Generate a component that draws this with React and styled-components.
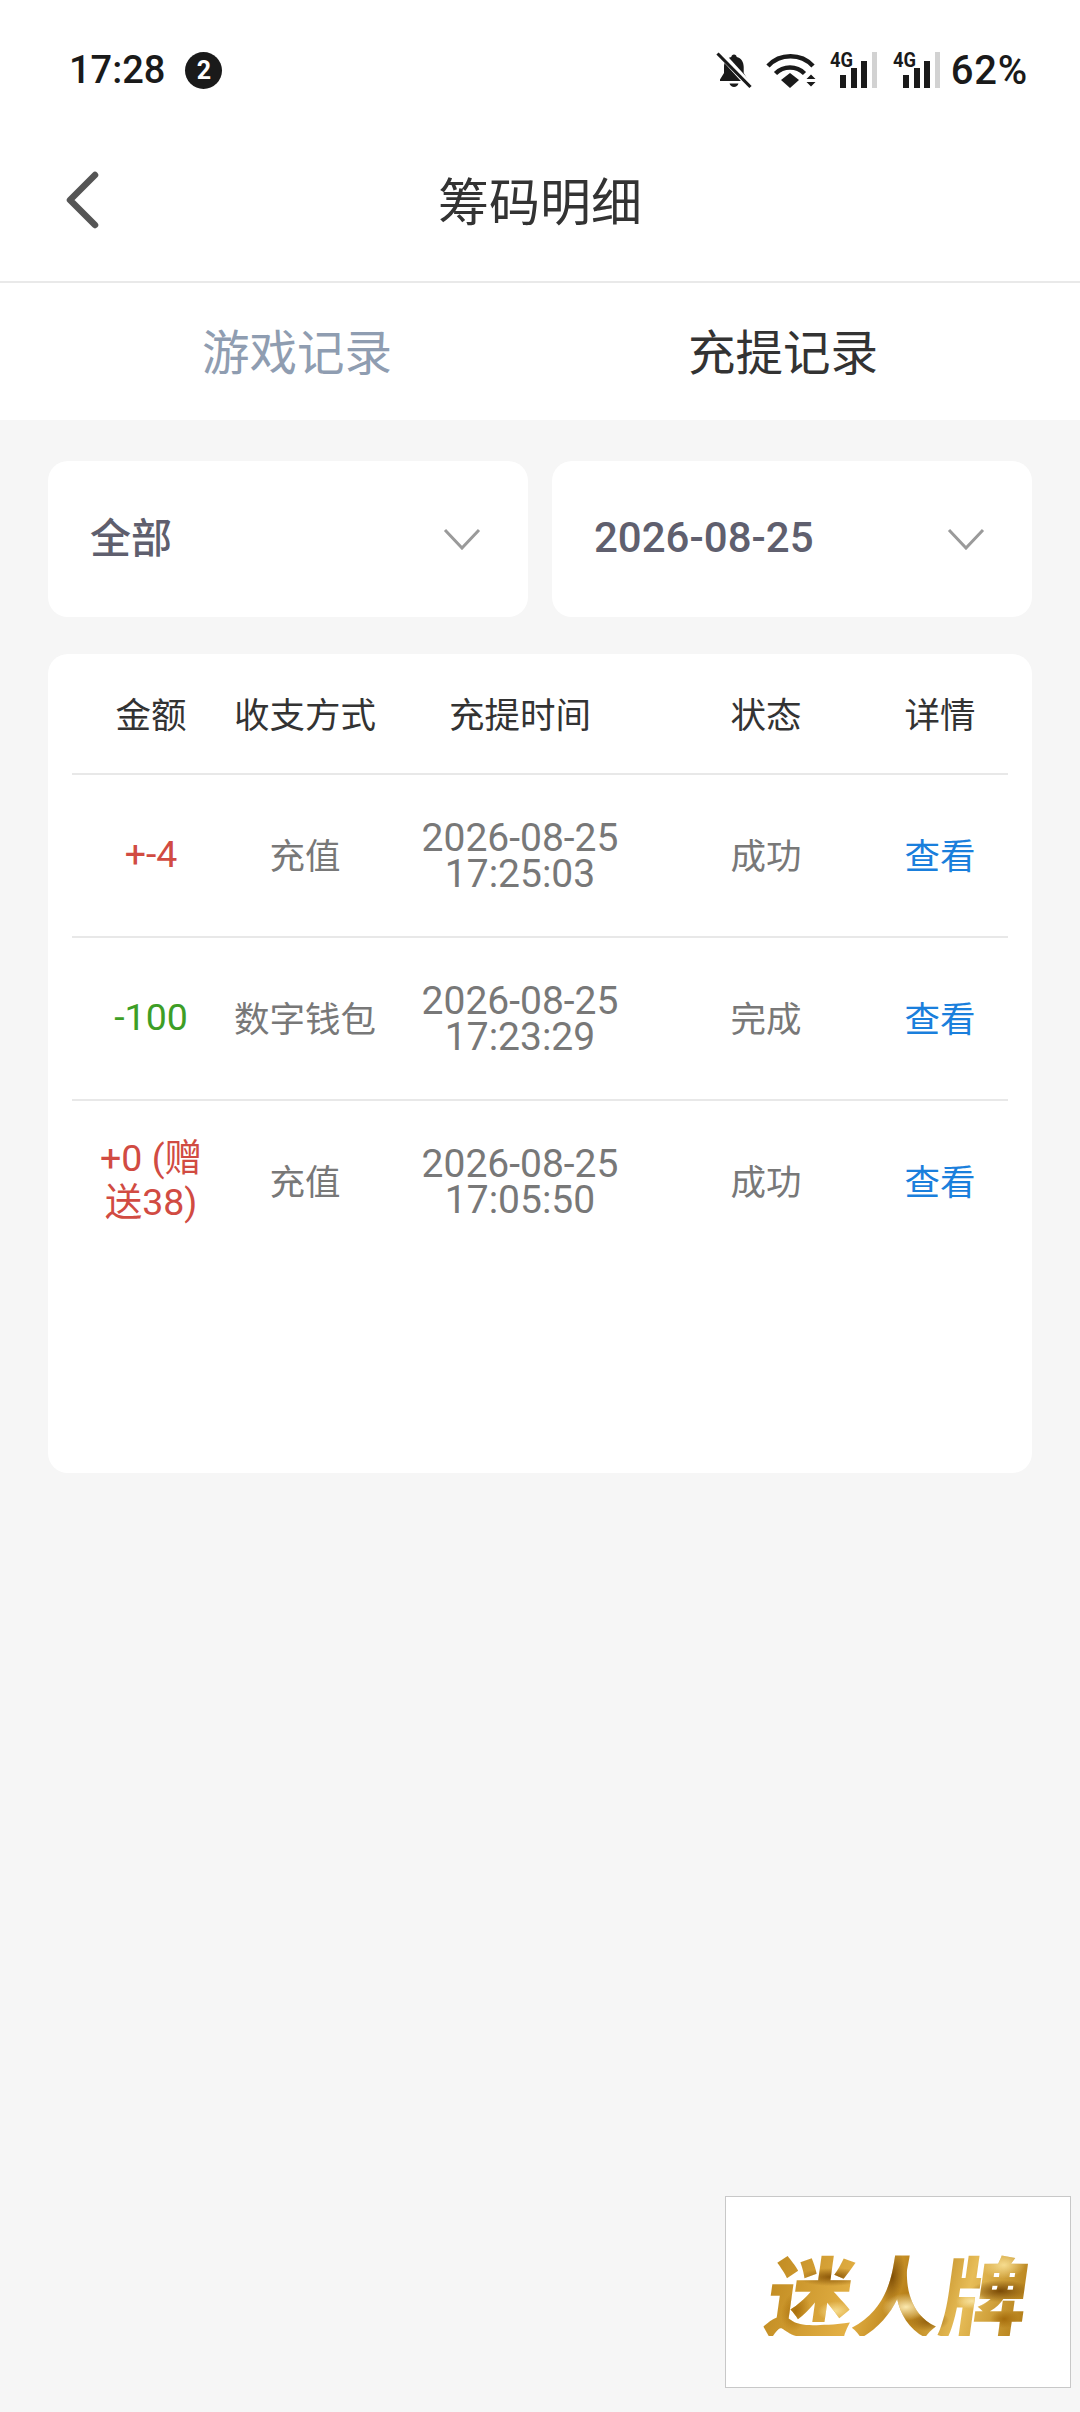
import React from 'react';
import styled, { createGlobalStyle } from 'styled-components';

const FONT = `Roboto, "Noto Sans CJK SC", sans-serif`;
const COLUMNS = '158px 150px 280px 212px 136px';

const GlobalStyle = createGlobalStyle`
  * { box-sizing: border-box; }
  html, body { margin: 0; padding: 0; background: #f6f6f6; }
  body { font-family: ${FONT}; }
`;

const Page = styled.div`
  position: relative;
  width: 1080px;
  height: 2412px;
  overflow: hidden;
  background: #f6f6f6;
`;

const StatusBar = styled.div`
  display: flex;
  align-items: center;
  justify-content: space-between;
  height: 122px;
  padding: 18px 52px 0 69px;
  background: #fff;
  color: #1a1a1a;
`;

const StatusGroup = styled.div`
  display: flex;
  align-items: center;
`;

const Clock = styled.span`
  font-size: 38px;
  font-weight: 500;
`;

const Badge = styled.span`
  display: flex;
  align-items: center;
  justify-content: center;
  width: 37px;
  height: 37px;
  margin-left: 20px;
  border-radius: 50%;
  background: #1a1a1a;
  color: #fff;
  font-size: 25px;
  font-weight: 700;
`;

const StatusIcon = styled.svg`
  display: block;
  overflow: visible;
  margin-left: ${({ $gap }) => $gap}px;
`;

const Battery = styled.span`
  margin-left: 10px;
  font-size: 40px;
  font-weight: 500;
  letter-spacing: .8px;
`;

const NavBar = styled.header`
  display: flex;
  align-items: center;
  justify-content: center;
  position: relative;
  height: 161px;
  padding-bottom: 6px;
  background: #fff;
  border-bottom: 2px solid #e9e9e9;
`;

const BackButton = styled.svg`
  position: absolute;
  left: 63px;
  top: 49px;
`;

const Title = styled.h1`
  margin: 0;
  font-size: 51px;
  font-weight: 400;
  color: #333;
`;

const Tabs = styled.nav`
  display: grid;
  grid-template-columns: 1fr 1fr;
  height: 137px;
  padding: 0 54px 5px;
  background: #fff;
`;

const Tab = styled.div`
  display: flex;
  align-items: center;
  justify-content: center;
  font-size: 47.5px;
  color: ${({ $active }) => ($active ? '#333' : '#8f9db1')};
`;

const Content = styled.main`
  display: flex;
  flex-direction: column;
  gap: 37px;
  padding: 41px 48px 0;
`;

const Filters = styled.div`
  display: grid;
  grid-template-columns: 1fr 1fr;
  gap: 24px;
`;

const Select = styled.div`
  display: flex;
  align-items: center;
  justify-content: space-between;
  height: 156px;
  padding: 0 47px 4px 42px;
  border-radius: 20px;
  background: #fff;
`;

const SelectValue = styled.span`
  padding-bottom: ${({ $date }) => ($date ? 0 : 4)}px;
  font-size: ${({ $date }) => ($date ? 42 : 41)}px;
  font-weight: 500;
  color: #5f5f6e;
`;

const SelectArrow = styled.svg`
  display: block;
  margin-top: 4px;
`;

const Card = styled.section`
  height: 819px;
  padding: 0 24px;
  border-radius: 20px;
  background: #fff;
`;

const HeaderRow = styled.div`
  display: grid;
  grid-template-columns: ${COLUMNS};
  align-items: center;
  height: 121px;
  padding-bottom: 3px;
  border-bottom: 2px solid #e8e8e8;
  font-size: 35.5px;
  color: #333;
  text-align: center;
`;

const Row = styled.div`
  display: grid;
  grid-template-columns: ${COLUMNS};
  align-items: center;
  height: 163px;
  padding-bottom: 4px;
  border-bottom: 2px solid ${({ $last }) => ($last ? 'transparent' : '#e8e8e8')};
  font-size: 35.5px;
  color: #787878;
  text-align: center;
`;

const Amount = styled.div`
  padding: 0 22px;
  font-size: 37.5px;
  line-height: 44px;
  color: ${({ $tone }) => ($tone === 'green' ? '#3d9e26' : '#d14b42')};
`;

const Time = styled.div`
  padding-top: 5px;
  font-size: 39px;
  line-height: 36px;
`;

const Link = styled.a`
  color: #1a7fdc;
`;

const LogoBox = styled.div`
  position: absolute;
  left: 725px;
  top: 2196px;
  display: flex;
  align-items: center;
  justify-content: center;
  width: 346px;
  height: 192px;
  background: #fff;
  border: 1.5px solid #c8c8c8;
`;

const LogoText = styled.span`
  display: block;
  font-family: "Noto Sans CJK SC", sans-serif;
  font-size: 87px;
  font-weight: 900;
  line-height: 1;
  transform: skewX(-8deg);
  color: transparent;
  background:
    radial-gradient(ellipse 34px 9px at 62px 28px, #8a5608 0%, transparent 100%),
    radial-gradient(ellipse 14px 20px at 30px 62px, #a86f0c 0%, transparent 100%),
    radial-gradient(ellipse 18px 10px at 70px 62px, #f6dc8f 0%, transparent 100%),
    radial-gradient(ellipse 12px 26px at 122px 28px, #7f4e06 0%, transparent 100%),
    radial-gradient(ellipse 24px 14px at 140px 58px, #fbe9b0 0%, transparent 100%),
    radial-gradient(ellipse 20px 10px at 165px 72px, #8f5c0a 0%, transparent 100%),
    radial-gradient(ellipse 30px 11px at 232px 42px, #7a4a06 0%, transparent 100%),
    radial-gradient(ellipse 22px 14px at 232px 16px, #f6dc8f 0%, transparent 100%),
    radial-gradient(ellipse 16px 8px at 205px 52px, #f8e4a2 0%, transparent 100%),
    radial-gradient(ellipse 14px 9px at 240px 70px, #a56c0c 0%, transparent 100%),
    linear-gradient(100deg, #c08a20, #e3b045 35%, #b47c14 55%, #e7bd58 75%, #b07a14);
  -webkit-background-clip: text;
  background-clip: text;
`;

const records = [
  { amount: '+-4', tone: 'red', type: '充值', date: '2026-08-25', time: '17:25:03', status: '成功' },
  { amount: '-100', tone: 'green', type: '数字钱包', date: '2026-08-25', time: '17:23:29', status: '完成' },
  { amount: '+0 (赠送38)', tone: 'red', type: '充值', date: '2026-08-25', time: '17:05:50', status: '成功' }
];

const BellOff = () =>
  <StatusIcon width="36" height="36" viewBox="0 0 36 36" $gap={0}>
    <path d="M18 2.500c1.500 0 2.600 1.100 2.700 2.500 4.600 1.200 7 5 7 10v6l4 6.500v1.500H4v-1.500l4-6.500v-6c0-5 2.500-8.800 7.300-10 .1-1.400 1.200-2.500 2.700-2.500z" fill="#1a1a1a" />
    <path d="M13.500 31.500h9c-.6 2-2.400 3.500-4.500 3.500s-3.900-1.500-4.500-3.500z" fill="#1a1a1a" />
    <path d="M3 0l32 35" stroke="#fff" strokeWidth="7" />
    <path d="M1.500 1.500l33 33.500" stroke="#1a1a1a" strokeWidth="3.200" />
  </StatusIcon>;

const Wifi = () =>
  <StatusIcon width="50" height="36" viewBox="0 0 50 36" $gap={14}>
    <path d="M2 14C14 1 35 1 47 14" fill="none" stroke="#1a1a1a" strokeWidth="4.500" />
    <path d="M9.500 21.500c8-8 21-8 29 0" fill="none" stroke="#1a1a1a" strokeWidth="4.500" />
    <path d="M15 28l9-7 9 7-9 8z" fill="#1a1a1a" />
    <path d="M45 22.500l4.500 4.500h-9zM40.500 30h9L45 34.500z" fill="#1a1a1a" />
  </StatusIcon>;

const Signal = ({ gap }) =>
  <StatusIcon width="48" height="36" viewBox="0 0 48 36" $gap={gap}>
    <text x="0" y="15" fontFamily="Roboto, sans-serif" fontSize="20" fontWeight="700" fill="#1a1a1a" textLength="23" lengthAdjust="spacingAndGlyphs">4G</text>
    <rect x="10" y="23" width="6" height="13" fill="#1a1a1a" />
    <rect x="21" y="16" width="6" height="20" fill="#1a1a1a" />
    <rect x="31" y="9" width="6" height="27" fill="#1a1a1a" />
    <rect x="42" y="0" width="5" height="36" fill="#d2d2d2" />
  </StatusIcon>;

const Chevron = () =>
  <SelectArrow width="38" height="22" viewBox="0 0 38 22">
    <path d="M2 2l17 18L36 2" fill="none" stroke="#9a9a9a" strokeWidth="3" />
  </SelectArrow>;

const App = () =>
  <Page>
    <GlobalStyle />
    <StatusBar>
      <StatusGroup>
        <Clock>17:28</Clock>
        <Badge>2</Badge>
      </StatusGroup>
      <StatusGroup>
        <BellOff />
        <Wifi />
        <Signal gap={14} />
        <Signal gap={15} />
        <Battery>62%</Battery>
      </StatusGroup>
    </StatusBar>
    <NavBar>
      <BackButton width="38" height="58" viewBox="0 0 38 58">
        <path d="M32 4L7 29l25 25" fill="none" stroke="#555" strokeWidth="6.500" strokeLinecap="round" strokeLinejoin="round" />
      </BackButton>
      <Title>筹码明细</Title>
    </NavBar>
    <Tabs>
      <Tab>游戏记录</Tab>
      <Tab $active>充提记录</Tab>
    </Tabs>
    <Content>
      <Filters>
        <Select>
          <SelectValue>全部</SelectValue>
          <Chevron />
        </Select>
        <Select>
          <SelectValue $date>2026-08-25</SelectValue>
          <Chevron />
        </Select>
      </Filters>
      <Card>
        <HeaderRow>
          <div>金额</div>
          <div>收支方式</div>
          <div>充提时间</div>
          <div>状态</div>
          <div>详情</div>
        </HeaderRow>
        {records.map((r, i) =>
          <Row key={r.time} $last={i === records.length - 1}>
            <Amount $tone={r.tone}>{r.amount}</Amount>
            <div>{r.type}</div>
            <Time>{r.date}<br />{r.time}</Time>
            <div>{r.status}</div>
            <div><Link>查看</Link></div>
          </Row>
        )}
      </Card>
    </Content>
    <LogoBox>
      <LogoText>迷人牌</LogoText>
    </LogoBox>
  </Page>;

export default App;
